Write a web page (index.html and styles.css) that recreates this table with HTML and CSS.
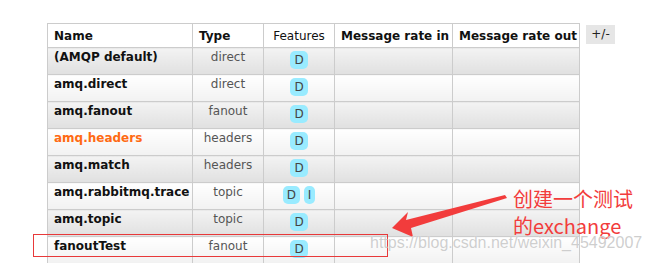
FILE: index.html
```html
<!DOCTYPE html>
<html>
<head>
<meta charset="utf-8">
<link rel="stylesheet" href="styles.css">
</head>
<body>
<div class="page">
  <table class="list">
    <thead>
      <tr>
        <th class="c-name">Name</th>
        <th class="c-type">Type</th>
        <th class="c-feat">Features</th>
        <th class="c-in">Message rate in</th>
        <th class="c-out">Message rate out</th>
      </tr>
    </thead>
    <tbody>
      <tr class="alt1"><td class="name">(AMQP default)</td><td class="type">direct</td><td class="feat"><abbr>D</abbr></td><td></td><td></td></tr>
      <tr class="alt2"><td class="name">amq.direct</td><td class="type">direct</td><td class="feat"><abbr>D</abbr></td><td></td><td></td></tr>
      <tr class="alt1"><td class="name">amq.fanout</td><td class="type">fanout</td><td class="feat"><abbr>D</abbr></td><td></td><td></td></tr>
      <tr class="alt2"><td class="name hover">amq.headers</td><td class="type">headers</td><td class="feat"><abbr>D</abbr></td><td></td><td></td></tr>
      <tr class="alt1"><td class="name">amq.match</td><td class="type">headers</td><td class="feat"><abbr>D</abbr></td><td></td><td></td></tr>
      <tr class="alt2"><td class="name">amq.rabbitmq.trace</td><td class="type">topic</td><td class="feat"><abbr>D</abbr> <abbr>I</abbr></td><td></td><td></td></tr>
      <tr class="alt1"><td class="name">amq.topic</td><td class="type">topic</td><td class="feat"><abbr>D</abbr></td><td></td><td></td></tr>
      <tr class="alt2"><td class="name">fanoutTest</td><td class="type">fanout</td><td class="feat"><abbr>D</abbr></td><td></td><td></td></tr>
      <tr class="alt1 tail"><td></td><td></td><td></td><td></td><td></td></tr>
    </tbody>
  </table>
  <div class="toggle">+/-</div>
</div>

<div class="redbox"></div>
<svg class="arrow" width="652" height="263" viewBox="0 0 652 263">
  <polygon points="392,228 408,212 406,220 505,195 507,198 411,228 413,237" fill="#f23c3c"/>
</svg>
<div class="note">创建一个测试<br>的exchange</div>
<div class="watermark">https://blog.csdn.net/weixin_45492007</div>
</body>
</html>
```
FILE: styles.css
```css
html, body {
  margin: 0;
  padding: 0;
  background: #fff;
  overflow: hidden;
}
body {
  width: 652px;
  height: 263px;
  position: relative;
  font-family: "DejaVu Sans", Verdana, sans-serif;
  font-size: 12px;
  color: #000;
}
.page {
  display: flex;
  align-items: flex-start;
  gap: 6px;
  padding: 23px 0 0 47px;
  height: 240px;
  overflow: hidden;
}
.list {
  border-collapse: collapse;
  table-layout: fixed;
  width: 533px;
}
.list th, .list td {
  border: 1px solid #ccc;
  text-align: left;
  vertical-align: top;
  line-height: 15px;
  overflow: hidden;
  white-space: nowrap;
}
.list thead tr { height: 24px; }
.list th {
  background: #fff;
  font-weight: bold;
  padding: 5px 6px 2px 6px;
  color: #111;
}
.list th.c-feat { font-weight: normal; text-align: center; }
.c-name { width: 132px; }
.c-type { width: 58px; }
.c-feat { width: 58px; }
.c-in { width: 105px; }
.c-out { width: 114px; }
.list tbody tr { height: 27px; }
.list td {
  padding: 3px 6px 0 6px;
}
.list tr.alt1 td {
  background: linear-gradient(to bottom, #f3f3f3 0%, #e0e0e0 100%);
}
.list tr.alt2 td {
  background: linear-gradient(to bottom, #ffffff 0%, #f2f2f2 100%);
}
.list td.name {
  font-weight: bold;
  color: #111;
  padding-top: 2px;
}
.list td.hover { color: #ff6a13; }
.list td.type {
  text-align: center;
  color: #555;
  padding-top: 2px;
}
.list td.feat {
  text-align: center;
  line-height: 18px;
}
abbr {
  display: inline-block;
  vertical-align: top;
  background: #99ebff;
  color: #444;
  border-radius: 5px;
  padding: 2px 4px;
  line-height: 14px;
  text-decoration: none;
}
.toggle {
  margin-top: 2px;
  background: #e6e6e6;
  color: #222;
  width: 29px;
  height: 19px;
  line-height: 19px;
  text-align: center;
  font-size: 12px;
}
.redbox {
  position: absolute;
  left: 33px;
  top: 234px;
  width: 353px;
  height: 21px;
  border: 1px solid #e8393a;
}
.arrow {
  position: absolute;
  left: 0;
  top: 0;
}
.note {
  position: absolute;
  left: 513px;
  top: 185px;
  font-family: "Noto Sans CJK SC", "Noto Sans", sans-serif;
  font-size: 20px;
  line-height: 27px;
  color: #f23c3c;
}
.watermark {
  position: absolute;
  left: 370px;
  top: 234px;
  font-family: "Liberation Sans", Arial, sans-serif;
  font-size: 16px;
  line-height: 18px;
  color: rgba(190,190,190,0.75);
  text-shadow: 0 0 1px #fff;
  white-space: nowrap;
}
```
